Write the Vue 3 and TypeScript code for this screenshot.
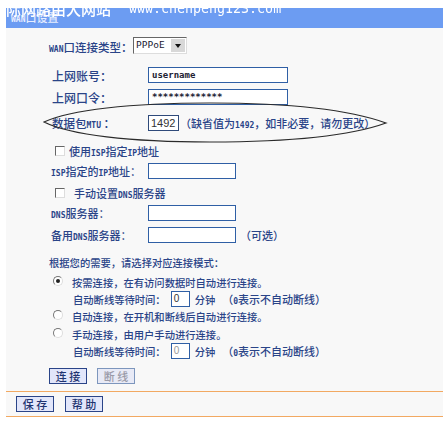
<template>
  <div class="page">
    <div class="watermark"><span>际网路由</span><span>大网站</span><span class="url">www.chenpeng123.com</span></div>
    <div class="panel">
      <div class="title"><b class="lat">WAN</b>口设置</div>
      <div class="body">
        <div class="row type-row">
          <span class="lbl type-lbl"><b class="lat">WAN</b>口连接类型：</span>
          <span class="select"><span class="select-val">PPPoE</span><span class="select-btn"><i></i></span></span>
        </div>
        <div class="row acct-first">
          <span class="lbl acct">上网账号：</span>
          <span class="input wide mono">username</span>
        </div>
        <div class="row acct-second">
          <span class="lbl acct">上网口令：</span>
          <span class="input wide mono">*************</span>
        </div>
        <div class="row mtu-row">
          <span class="lbl mtu-lbl">数据包<b class="lat">MTU</b>&nbsp;：</span>
          <span class="input mtu">1492</span>
          <span class="note">（缺省值为<b class="lat">1492</b>，如非必要，请勿更改）</span>
        </div>
        <div class="row check-row first-check">
          <span class="check"></span>
          <span class="note">使用<b class="lat">ISP</b>指定<b class="lat">IP</b>地址</span>
        </div>
        <div class="row field isp">
          <span class="lbl"><b class="lat">ISP</b>指定的<b class="lat">IP</b>地址：</span>
          <span class="input mid"></span>
        </div>
        <div class="row check-row second-check">
          <span class="check"></span>
          <span class="note">手动设置<b class="lat">DNS</b>服务器</span>
        </div>
        <div class="row field dns">
          <span class="lbl"><b class="lat">DNS</b>服务器：</span>
          <span class="input mid"></span>
        </div>
        <div class="row field alt">
          <span class="lbl">备用<b class="lat">DNS</b>服务器：</span>
          <span class="input mid"></span>
          <span class="note optional">（可选）</span>
        </div>
        <div class="row mode-title">根据您的需要，请选择对应连接模式：</div>
        <template v-for="(mode, i) in modes" :key="mode.text">
          <div class="row mode" :class="`mode-${i}`">
            <span class="radio" :class="{ on: mode.on }"></span>
            <span>{{ mode.text }}</span>
          </div>
          <div v-if="mode.wait" class="row wait">
            <span>自动断线等待时间：</span>
            <span class="input mins" :class="{ off: !mode.on }">0</span>
            <span>分钟</span>
            <span class="hint">（<b class="lat">0</b>表示不自动断线）</span>
          </div>
        </template>
        <div class="row btns">
          <span class="btn">连 接</span>
          <span class="btn off">断 线</span>
        </div>
      </div>
      <div class="foot">
        <span class="btn">保 存</span>
        <span class="btn">帮 助</span>
      </div>
    </div>
    <svg class="ring" width="350" height="44" viewBox="0 0 350 44">
      <path
        d="M2 20 C28 8 88 1 168 1 C248 1 308 8 344 21 C308 34 248 40 168 40 C88 40 28 33 2 20 Z"
        fill="none"
        stroke="#2b2b2b"
        stroke-width="1.2"
      />
    </svg>
  </div>
</template>

<script setup lang="ts">
const modes = [
  { text: '按需连接，在有访问数据时自动进行连接。', on: true, wait: true },
  { text: '自动连接，在开机和断线后自动进行连接。', on: false, wait: false },
  { text: '手动连接，由用户手动进行连接。', on: false, wait: true },
]
</script>

<style>
html, body { margin: 0; background: #fff; }
</style>

<style scoped>
.page {
  position: relative;
  width: 448px;
  height: 424px;
  padding: 8px 5px 0 6px;
  box-sizing: border-box;
  overflow: hidden;
  font-family: "Noto Sans CJK SC", "DejaVu Sans", sans-serif;
  font-size: 10.3px;
  font-weight: 500;
  color: #2a4488;
  filter: blur(0.4px);
}
.watermark {
  position: absolute;
  left: 6px;
  top: -1px;
  display: flex;
  font-size: 15px;
  line-height: 20px;
  color: #fff;
  white-space: nowrap;
  z-index: 2;
}
.url { font: 13.3px/20px "DejaVu Sans Mono", monospace; margin-left: 18px; }
.panel { background: #f8f8f8; height: 408px; }
.title {
  height: 20px;
  background: #6c9cf2;
  color: #e6edff;
  font-size: 11px;
  padding: 1px 0 0 5px;
  box-sizing: border-box;
  line-height: 16px;
}
.body { display: flow-root; height: 364px; border-bottom: 1px solid #f2a962; box-sizing: border-box; }
.row { display: flex; align-items: center; height: 16px; white-space: nowrap; }
.lat { font: bold 8px "DejaVu Sans Mono", monospace; }
.lbl { width: 97px; padding-left: 45px; flex: none; font-size: 11px; }
.type-row { margin-top: 9px; height: 17px; }
.type-lbl { padding: 3px 0 0 43px; width: 84px; font-size: 11.5px; }
.acct { padding-left: 46px; width: 96px; font-size: 12px; }
.mtu-lbl { padding-left: 46px; width: 96px; font-size: 11.5px; }
.acct-first { margin-top: 13px; }
.acct-second { margin-top: 6px; }
.mtu-row { margin-top: 10px; }
.first-check { margin-top: 13px; height: 14px; }
.second-check { margin-top: 7px; height: 14px; }
.isp, .dns { margin-top: 5px; }
.alt { margin-top: 6px; }
.check-row .note { margin-left: 4px; }
.second-check .note { margin-left: 9px; }
.check {
  width: 10px;
  height: 10px;
  margin-left: 49px;
  background: #fff;
  border: 1px solid;
  border-color: #666 #ddd #ddd #666;
  box-sizing: border-box;
}
.input {
  box-sizing: border-box;
  height: 16px;
  background: #fff;
  border: 1px solid #2f5fa5;
  color: #333;
  font-size: 10px;
  font-weight: 400;
  line-height: 14px;
  padding-left: 2px;
  flex: none;
}
.wide { width: 140px; }
.mid { width: 88px; }
.mono { font: bold 9px/14px "DejaVu Sans Mono", monospace; color: #223; padding-left: 3px; }
.mtu { width: 31px; margin-right: 1px; border-color: #2f4a7a; font-family: "Liberation Sans", sans-serif; font-size: 11px; }
.note { font-size: 11px; }
.optional { margin-left: 4px; }
.select {
  display: flex;
  width: 54px;
  height: 17px;
  box-sizing: border-box;
  background: #fff;
  border: 1px solid;
  border-color: #666 #ddd #ddd #666;
  color: #223;
}
.select-val { flex: 1; font: 9.5px/14px "DejaVu Sans Mono", monospace; padding-left: 2px; }
.select-btn {
  width: 14px;
  margin: 1px;
  background: #d8d8d8;
  display: flex;
  align-items: center;
  justify-content: center;
}
.select-btn i {
  border: 3px solid transparent;
  border-top: 4px solid #111;
  border-bottom: 0;
}
.mode-title { margin-top: 11px; padding-left: 43px; }
.mode-0 { margin-top: 4px; }
.mode-1 { margin-top: 1px; }
.mode-2 { margin-top: 2px; }
.radio {
  position: relative;
  flex: none;
  width: 10px;
  height: 10px;
  margin: -3px 9px 0 47px;
  border-radius: 50%;
  background: #fff;
  border: 1px solid;
  border-color: #777 #ddd #ddd #777;
  box-sizing: border-box;
}
.radio.on::after {
  content: "";
  position: absolute;
  inset: 2px;
  border-radius: 50%;
  background: #222;
}
.wait { padding-left: 67px; margin-top: 1px; }
.mins { width: 19px; margin: 0 5px 0 5px; font-family: "Liberation Sans", sans-serif; }
.mins.off { color: #999; }
.hint { margin-left: 7px; font-size: 11px; }
.btn {
  width: 38px;
  height: 16px;
  box-sizing: border-box;
  background: #e2e6fa;
  border: 1px solid #2a4488;
  text-align: center;
  font-size: 11px;
  line-height: 14px;
  color: #1f3370;
}
.btn.off { color: #9a9aa8; border-color: #7d96bd; background: #e8eaf6; }
.btns { gap: 10px; padding-left: 43px; margin-top: 9px; }
.foot {
  display: flex;
  gap: 11px;
  padding: 4px 0 0 10px;
  height: 25px;
  box-sizing: border-box;
  border-bottom: 1px solid #f2a962;
}
.ring { position: absolute; left: 42px; top: 102px; }
</style>
